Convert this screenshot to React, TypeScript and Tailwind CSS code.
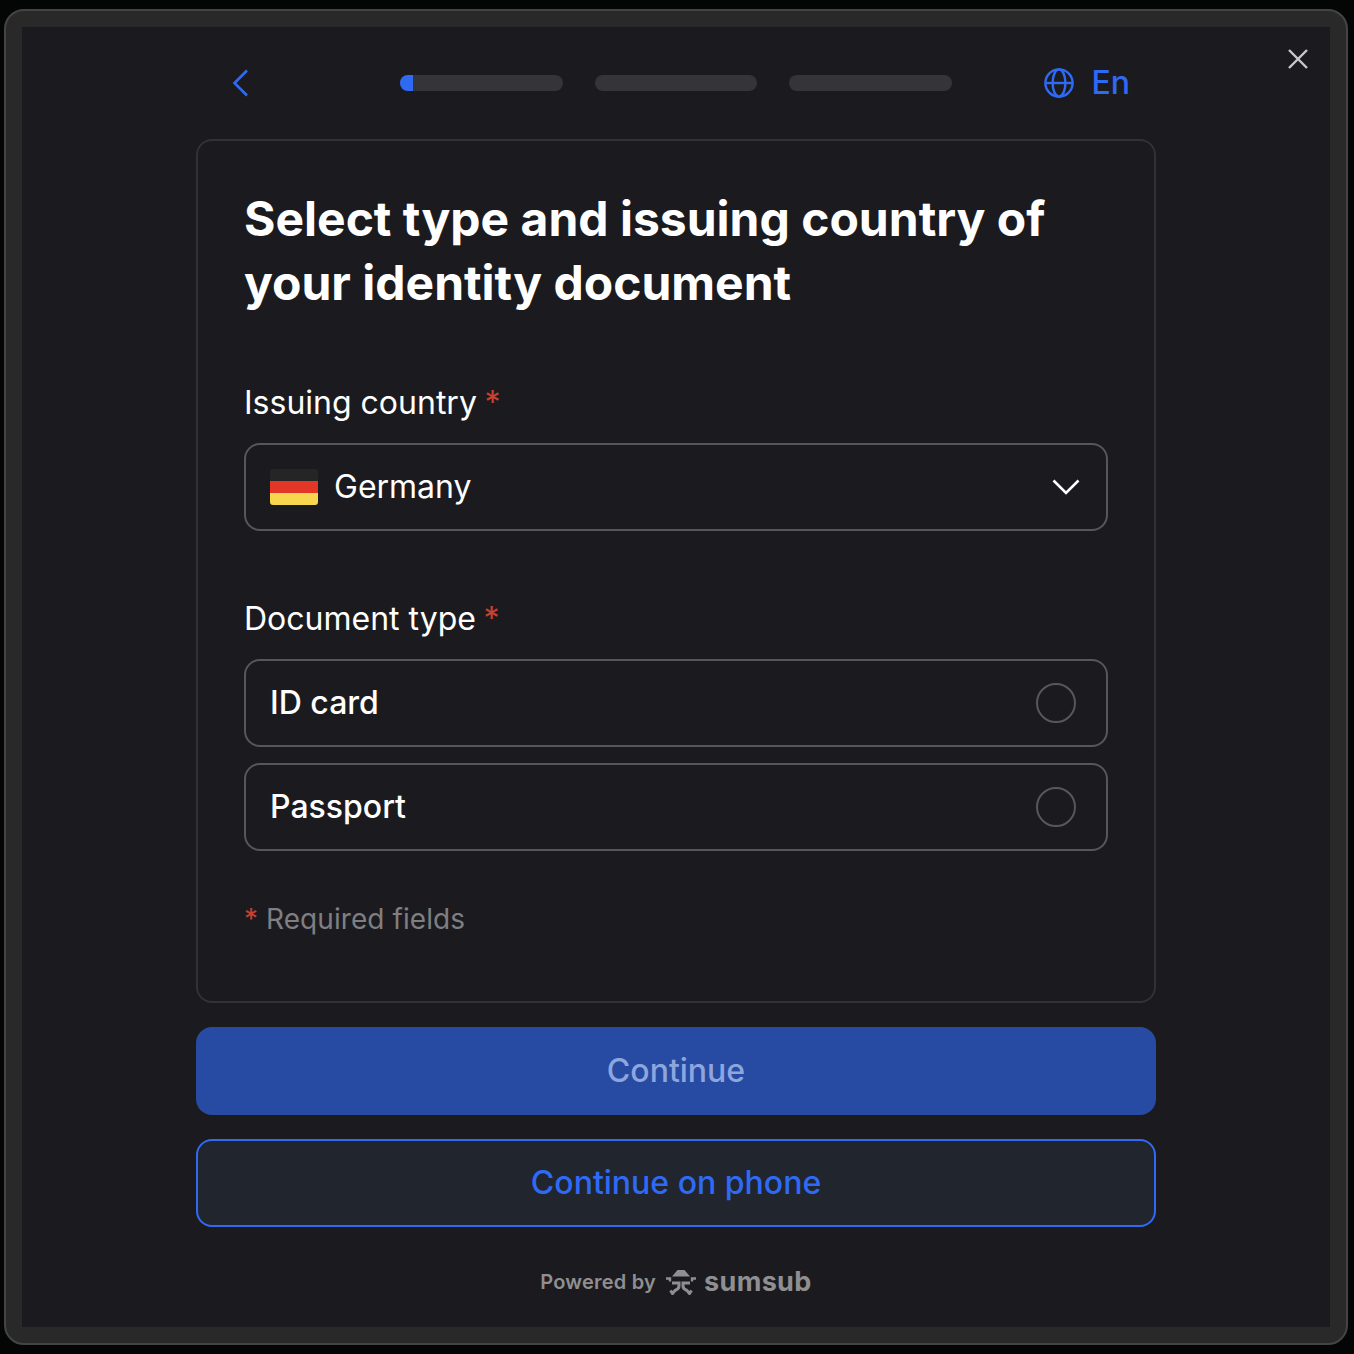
const font = { fontFamily: 'Inter, "Liberation Sans", sans-serif' };

function Asterisk() {
  return <span className="ml-[7.5px] text-[#c8402f]">*</span>;
}

function ProgressBar({ active }: { active?: boolean }) {
  return (
    <div className="w-[162.67px] h-4 rounded-full bg-[#343439] overflow-hidden">
      {active && <div className="w-[13px] h-full bg-[#2f6af5]" />}
    </div>
  );
}

function Option({ label }: { label: string }) {
  return (
    <div className="flex items-center justify-between h-[88px] pl-6 pr-[30px] rounded-2xl border-2 border-[#57575b]">
      <span className="text-[32px] leading-10 font-medium text-white">{label}</span>
      <span className="w-10 h-10 rounded-full border-2 border-[#57575b]" />
    </div>
  );
}

function SumsubMark() {
  return (
    <svg width="32" height="26" viewBox="0 0 32 26" fill="none" stroke="#8f8f92" strokeWidth="3">
      <path d="M12.5 1 H19.5 L25 7.5 H7 Z" fill="#8f8f92" stroke="none" />
      <path d="M1 9.5 H5 V12.5 M31 9.5 H27 V12.5" strokeWidth="2.4" />
      <path d="M7 14 H14 V17 Q14 20 10 21.5 L7.5 24.5 L5.5 21.5" />
      <path d="M25 14 H18 V17 Q18 20 22 21.5 L24.5 24.5 L26.5 21.5" />
    </svg>
  );
}

export default function App() {
  return (
    <div className="w-[1354px] h-[1354px] bg-[#040505] pt-[9px] pl-1 pr-[6px] pb-[9px]" style={font}>
      <div className="h-[1336px] rounded-[20px] border-2 border-[#444446] bg-[#29292a] pt-4 pb-[15px] pl-4 pr-4">
        <div className="relative h-[1300px] bg-[#1b1b1f] flex flex-col items-center">
          <button className="absolute top-[22px] right-[22px] text-[#c9c9cb]">
            <svg width="20" height="20" viewBox="0 0 20 20" fill="none" stroke="currentColor" strokeWidth="2.4">
              <path d="M1 1 L19 19 M19 1 L1 19" />
            </svg>
          </button>

          <div className="w-[960px] pt-9">
            <div className="grid grid-cols-[1fr_auto_1fr] items-center h-10 mb-9">
              <div className="pl-[36px]">
                <svg width="18" height="28" viewBox="0 0 18 28" fill="none" stroke="#2f6af5" strokeWidth="2.6" className="block">
                  <path d="M15 1.5 L2.5 14 L15 26.5" />
                </svg>
              </div>
              <div className="flex gap-8">
                <ProgressBar active />
                <ProgressBar />
                <ProgressBar />
              </div>
              <div className="flex items-center justify-end gap-[17px] pr-[26px]">
                <svg width="30" height="30" viewBox="0 0 30 30" fill="none" stroke="#2f6af5" strokeWidth="2.4">
                  <circle cx="15" cy="15" r="13.6" />
                  <ellipse cx="15" cy="15" rx="6.4" ry="13.6" />
                  <path d="M1.4 15 H28.6" />
                </svg>
                <span className="text-[32px] leading-10 font-medium text-[#2f6af5]">En</span>
              </div>
            </div>

            <div className="h-[864px] rounded-2xl border-2 border-[#323236] px-[46px] pt-[46px]">
              <h1 className="text-[48px] leading-16 font-bold text-white">
                Select type and issuing country of
                <br />
                your identity document
              </h1>

              <div className="mt-[68px] text-[32px] leading-10 text-white">
                Issuing country
                <Asterisk />
              </div>
              <div className="mt-5 flex items-center justify-between h-[88px] pl-6 pr-[26px] rounded-2xl border-2 border-[#57575b]">
                <div className="flex items-center gap-4">
                  <div className="w-12 h-9 rounded-[3px] overflow-hidden flex flex-col">
                    <div className="h-3 bg-[#252525]" />
                    <div className="h-3 bg-[#e23726]" />
                    <div className="h-3 bg-[#f8d64e]" />
                  </div>
                  <span className="text-[32px] leading-10 text-white">Germany</span>
                </div>
                <svg width="28" height="16" viewBox="0 0 28 16" fill="none" stroke="#ffffff" strokeWidth="2.6">
                  <path d="M1.5 1.5 L14 14 L26.5 1.5" />
                </svg>
              </div>

              <div className="mt-[68px] text-[32px] leading-10 text-white">
                Document type
                <Asterisk />
              </div>
              <div className="mt-5 flex flex-col gap-4">
                <Option label="ID card" />
                <Option label="Passport" />
              </div>

              <div className="mt-[50px] text-[28px] leading-9 text-[#7f7f83]">
                <span className="text-[#c8402f]">*</span>
                <span className="ml-[8px] tracking-[0.07px]">Required fields</span>
              </div>
            </div>

            <button className="mt-6 w-full h-[88px] rounded-2xl bg-[#274ba3] text-[32px] leading-10 font-medium text-[#8ea6de]">
              Continue
            </button>
            <button className="mt-6 w-full h-[88px] rounded-2xl border-2 border-[#2f6af5] bg-[#21252e] text-[32px] leading-10 font-medium text-[#2f6af5]">
              Continue on phone
            </button>

            <div className="mt-[41px] flex items-center justify-center gap-[9px] text-[#8f8f92]">
              <span className="text-[20px] leading-7 font-semibold tracking-[0.2px]">Powered by</span>
              <SumsubMark />
              <span className="ml-[-2px] text-[27px] leading-7 font-bold tracking-[0.35px]">sumsub</span>
            </div>
          </div>
        </div>
      </div>
    </div>
  );
}
